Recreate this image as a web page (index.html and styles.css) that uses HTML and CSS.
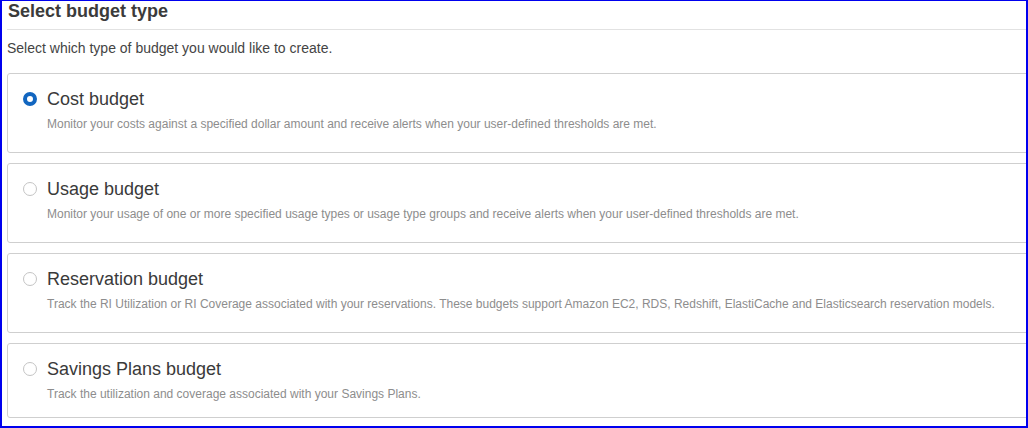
FILE: index.html
```html
<!DOCTYPE html>
<html lang="en">
<head>
<meta charset="utf-8">
<title>Select budget type</title>
<link rel="stylesheet" href="styles.css">
</head>
<body>
<div class="frame">
  <div class="content">
    <h1 class="heading">Select budget type</h1>
    <div class="divider"></div>
    <p class="intro">Select which type of budget you would like to create.</p>
    <div class="options">
      <label class="card">
        <span class="radio radio--checked"></span>
        <span class="card-text">
          <span class="card-title">Cost budget</span>
          <span class="card-desc">Monitor your costs against a specified dollar amount and receive alerts when your user-defined thresholds are met.</span>
        </span>
      </label>
      <label class="card">
        <span class="radio"></span>
        <span class="card-text">
          <span class="card-title">Usage budget</span>
          <span class="card-desc">Monitor your usage of one or more specified usage types or usage type groups and receive alerts when your user-defined thresholds are met.</span>
        </span>
      </label>
      <label class="card">
        <span class="radio"></span>
        <span class="card-text">
          <span class="card-title">Reservation budget</span>
          <span class="card-desc">Track the RI Utilization or RI Coverage associated with your reservations. These budgets support Amazon EC2, RDS, Redshift, ElastiCache and Elasticsearch reservation models.</span>
        </span>
      </label>
      <label class="card card--last">
        <span class="radio"></span>
        <span class="card-text">
          <span class="card-title">Savings Plans budget</span>
          <span class="card-desc">Track the utilization and coverage associated with your Savings Plans.</span>
        </span>
      </label>
    </div>
  </div>
</div>
</body>
</html>
```

FILE: styles.css
```css
html, body {
  margin: 0;
  padding: 0;
  background: #ffffff;
}

.frame {
  box-sizing: border-box;
  width: 1028px;
  height: 428px;
  border: 2px solid #0000ee;
  border-top-width: 1px;
  overflow: hidden;
  background: #ffffff;
  font-family: "Liberation Sans", Arial, sans-serif;
}

.content {
  padding-left: 5px;
  margin-right: -40px;
}

.heading {
  margin: 0;
  padding: 1px 0 0 1px;
  font-size: 18px;
  line-height: 18px;
  font-weight: bold;
  color: #3b3b3b;
}

.divider {
  height: 1px;
  background: #e2e2e2;
  margin-top: 9px;
}

.intro {
  margin: 9px 0 0 0;
  font-size: 14px;
  line-height: 18px;
  color: #444444;
}

.options {
  margin-top: 16px;
  display: flex;
  flex-direction: column;
  gap: 10px;
}

.card {
  display: flex;
  align-items: flex-start;
  gap: 10px;
  border: 1px solid #cfcfcf;
  border-radius: 3px;
  padding: 14px 0 20px 15px;
  background: #ffffff;
}

.card--last {
  padding-bottom: 15px;
}

.radio {
  box-sizing: border-box;
  flex: none;
  width: 14px;
  height: 14px;
  margin-top: 4px;
  border-radius: 50%;
  border: 1px solid #c4c4c4;
  background: #ffffff;
}

.radio--checked {
  border: 4.5px solid #1266c0;
}

.card-text {
  display: flex;
  flex-direction: column;
  gap: 6px;
}

.card-title {
  font-size: 18px;
  line-height: 22px;
  color: #3a3a3a;
}

.card-desc {
  font-size: 12px;
  line-height: 16px;
  color: #8d8d8d;
}
```
